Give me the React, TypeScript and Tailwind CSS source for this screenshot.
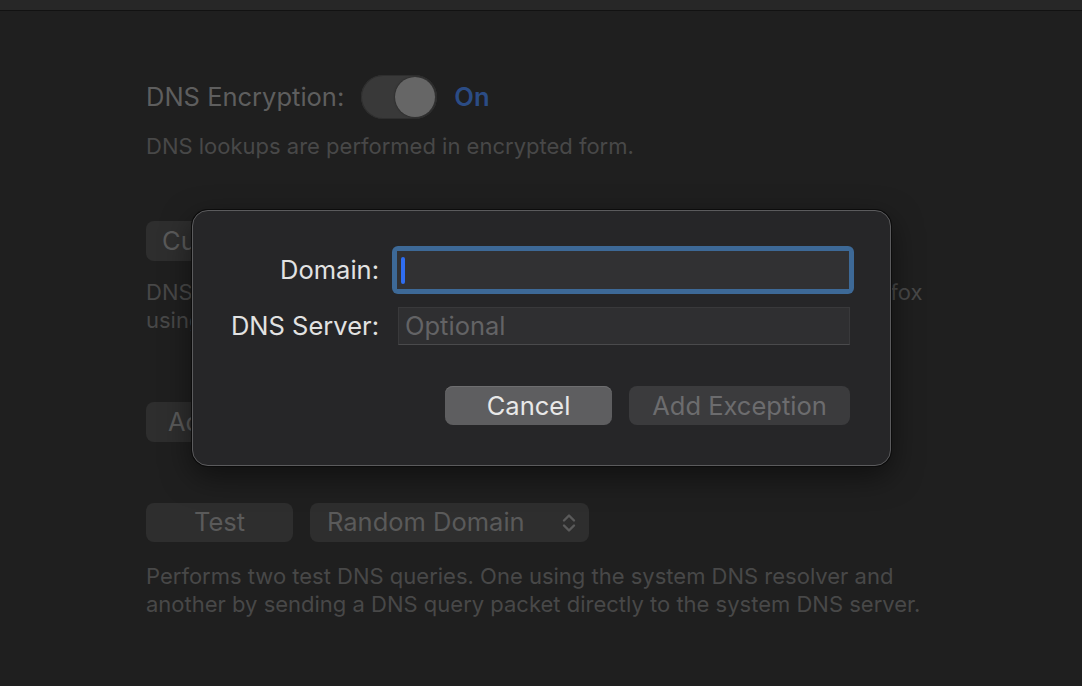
import React from "react";

const font = { fontFamily: "Inter, 'Noto Sans', sans-serif" };

function Toggle() {
	return (
		<div className="flex h-[44px] w-[76px] items-center justify-end rounded-full bg-[#393939] p-[2px] shadow-[inset_0_0_0_1px_#2e2e2e]">
			<div className="h-[40px] w-[40px] rounded-full bg-[#666666] shadow-[0_0_2px_rgba(0,0,0,0.5)]" />
		</div>
	);
}

function Chevrons() {
	return (
		<svg width="16" height="24" viewBox="0 0 16 24" fill="none">
			<path d="M3 9.5 L8 4.5 L13 9.5" stroke="#5a5a5a" strokeWidth="2.4" strokeLinecap="round" strokeLinejoin="round" />
			<path d="M3 14.5 L8 19.5 L13 14.5" stroke="#5a5a5a" strokeWidth="2.4" strokeLinecap="round" strokeLinejoin="round" />
		</svg>
	);
}

function Dialog() {
	return (
		<div className="absolute left-[192px] top-[210px] h-[256px] w-[699px] rounded-[16px] border border-[#5b5b5d] bg-[#262628] shadow-[0_0_0_1px_#0c0c0c,0_10px_30px_rgba(0,0,0,0.5)]">
			<div className="flex flex-col pl-[20px] pr-[36px] pt-[35px]">
				<div className="flex items-center">
					<span className="w-[166px] shrink-0 whitespace-nowrap text-right text-[25.5px] text-[#e2e2e2]">Domain:</span>
					<div className="ml-[13px] flex h-[48px] w-[462px] shrink-0 items-center rounded-[6px] bg-[#3d6997] p-[5px]">
						<div className="flex h-full w-full items-center bg-[#313133] pl-[4px]">
							<div className="h-[27px] w-[4px] rounded-full bg-[#2f6df0]" />
						</div>
					</div>
				</div>
				<div className="mt-[13px] flex items-center">
					<span className="w-[166px] shrink-0 whitespace-nowrap text-right text-[25.5px] text-[#e2e2e2]">DNS Server:</span>
					<div className="ml-[19px] flex h-[38px] w-[452px] shrink-0 items-center border border-[#39393b] border-b-[#4a4a4c] bg-[#2f2f31] pl-[6px] text-[25.5px] text-[#636365]">
						Optional
					</div>
				</div>
				<div className="mt-[41px] flex justify-end gap-[17px] pr-[4px]">
					<button className="h-[39px] w-[167px] rounded-[8px] bg-[#5e5e60] text-[25.5px] text-[#e8e8e8] shadow-[inset_0_1px_0_#6e6e70]">
						Cancel
					</button>
					<button className="h-[39px] w-[221px] rounded-[8px] bg-[#3b3b3d] text-[25.5px] text-[#6c6c6e]">
						Add Exception
					</button>
				</div>
			</div>
		</div>
	);
}

export default function App() {
	return (
		<div className="relative h-[686px] w-[1082px] overflow-hidden bg-[#1f1f1f]" style={font}>
			<div className="h-[11px] border-b border-[#121212] bg-[#272727]" />
			<div className="flex flex-col pl-[146px] pt-[64px]">
				<div className="flex items-center">
					<span className="text-[25.5px] text-[#5e5e5e]">DNS Encryption:</span>
					<div className="ml-[17px]">
						<Toggle />
					</div>
					<span className="ml-[17px] text-[25.5px] font-semibold text-[#2b4c85]">On</span>
				</div>
				<p className="mt-[13px] text-[22px] leading-[28px] text-[#484848]">DNS lookups are performed in encrypted form.</p>

				<div className="mt-[61px]">
					<button className="h-[40px] w-[160px] rounded-[8px] bg-[#2e2e2e] pl-[16px] text-left text-[25.5px] text-[#5a5a5a]">
						Custom
					</button>
				</div>
				<p className="mt-[17px] text-[22px] leading-[28px] text-[#484848]">
					DNS exceptions let domains be resolved by a chosen server, e.g. in Firefox
					<br />
					using a different resolver for local names.
				</p>

				<div className="mt-[68px]">
					<button className="h-[40px] w-[160px] rounded-[8px] bg-[#2e2e2e] pl-[22px] text-left text-[25.5px] text-[#5a5a5a]">
						Add
					</button>
				</div>

				<div className="mt-[61px] flex items-center gap-[17px]">
					<button className="h-[39px] w-[147px] rounded-[8px] bg-[#2e2e2e] text-[25.5px] text-[#5a5a5a]">Test</button>
					<div className="flex h-[39px] w-[279px] items-center justify-between rounded-[8px] bg-[#2e2e2e] pl-[17px] pr-[12px] text-[25.5px] text-[#5a5a5a]">
						<span>Random Domain</span>
						<Chevrons />
					</div>
				</div>
				<p className="mt-[20px] text-[22px] leading-[28px] text-[#484848]">
					Performs two test DNS queries. One using the system DNS resolver and
					<br />
					another by sending a DNS query packet directly to the system DNS server.
				</p>
			</div>
			<Dialog />
		</div>
	);
}
